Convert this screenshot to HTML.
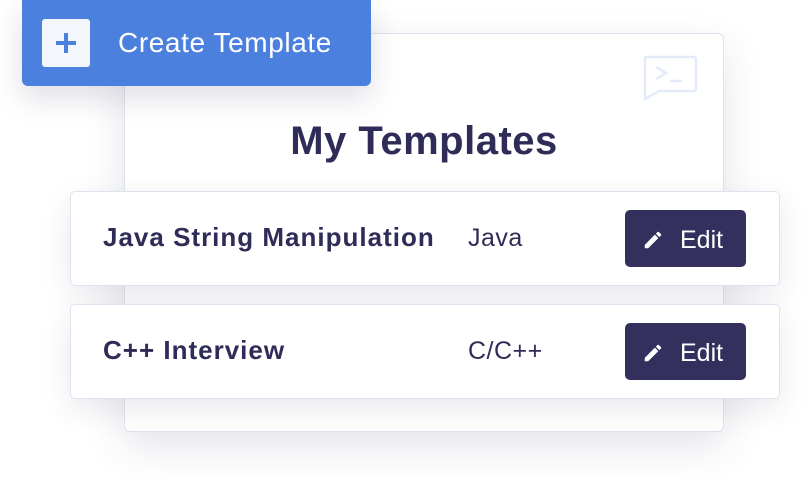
<!DOCTYPE html><html><head><style>
body{margin:0;width:807px;height:485px;background:#fff;position:relative;overflow:hidden;font-family:"Liberation Sans",sans-serif;color:#2f2c57}
.a{position:absolute;box-sizing:border-box}
.card{left:124px;top:33px;width:600px;height:399px;background:#fff;border:1.5px solid #dde3ee;border-radius:6px;box-shadow:0 15px 40px rgba(40,40,80,.12)}
.btn{left:22px;top:0;width:349px;height:86px;background:#4b80df;border-radius:0 0 6px 6px;box-shadow:0 12px 30px rgba(40,40,80,.15)}
.row{left:70px;width:710px;height:95px;background:#fff;border:1.5px solid #dde3ee;border-radius:5px;box-shadow:0 10px 30px rgba(40,40,80,.1)}
.edit{left:625px;width:121px;height:57px;background:#33305d;border-radius:5px;color:#fff;font-size:25px;line-height:60px;padding-left:55px}
.t{font-size:26px;font-weight:bold;left:103px;letter-spacing:1px}
.l{font-size:25px;left:468px;letter-spacing:.5px}
</style></head><body>
<div class="a card"></div>
<svg class="a" style="left:642px;top:55px" width="56" height="46" viewBox="0 0 56 46"><path d="M4 2h48a2 2 0 0 1 2 2v30a2 2 0 0 1-2 2H17L3 44V4a2 2 0 0 1 1-2z" fill="none" stroke="#e3ebf8" stroke-width="2.5"/><path d="M14 12l10 6-10 6M28 26h12" fill="none" stroke="#e3ebf8" stroke-width="2.5"/></svg>
<div class="a" style="left:124px;width:600px;top:119px;text-align:center;font-size:40px;font-weight:bold;letter-spacing:.5px">My Templates</div>
<div class="a btn"></div>
<div class="a" style="left:42px;top:19px;width:48px;height:48px;background:#f3f7fc;border-radius:3px"></div>
<div class="a" style="left:56px;top:41px;width:20px;height:4px;background:#4b80df"></div>
<div class="a" style="left:64px;top:33px;width:4px;height:20px;background:#4b80df"></div>
<div class="a" style="left:118px;top:27px;font-size:28px;color:#fff;letter-spacing:.6px">Create Template</div>
<div class="a row" style="top:191px"></div>
<div class="a row" style="top:304px"></div>
<div class="a t" style="top:222px">Java String Manipulation</div>
<div class="a l" style="top:224px">Java</div>
<div class="a t" style="top:335px">C++ Interview</div>
<div class="a l" style="top:337px">C/C++</div>
<div class="a edit" style="top:210px">Edit</div>
<div class="a edit" style="top:323px">Edit</div>
<svg class="a" style="left:642px;top:229px" width="22" height="22" viewBox="0 0 24 24"><path d="M3 17.25V21h3.75L17.8 9.94l-3.75-3.75L3 17.25zM20.7 7.04a1 1 0 0 0 0-1.41l-2.34-2.34a1 1 0 0 0-1.41 0l-1.830 1.83 3.75 3.75 1.83-1.83z" fill="#fff"/></svg>
<svg class="a" style="left:642px;top:342px" width="22" height="22" viewBox="0 0 24 24"><path d="M3 17.25V21h3.75L17.8 9.94l-3.75-3.75L3 17.25zM20.7 7.04a1 1 0 0 0 0-1.41l-2.34-2.34a1 1 0 0 0-1.41 0l-1.83 1.83 3.75 3.75 1.83-1.83z" fill="#fff"/></svg>
</body></html>
